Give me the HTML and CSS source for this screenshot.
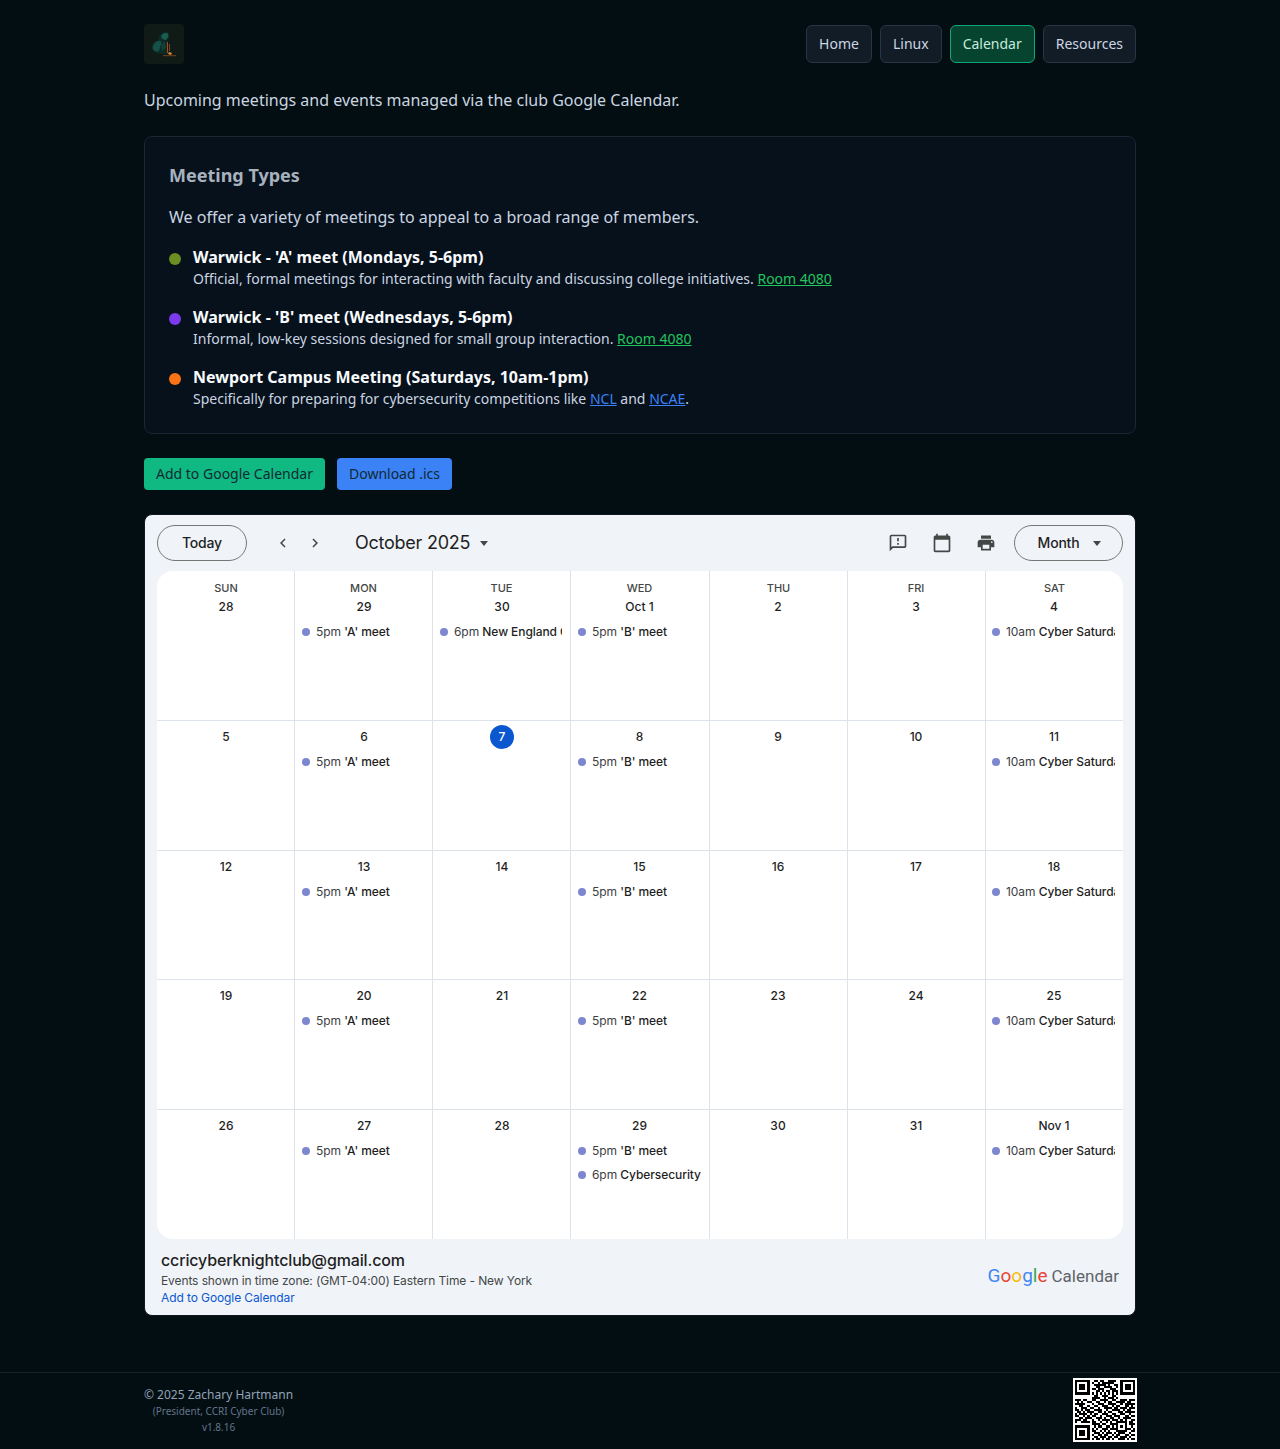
FILE: index.html
```html
<!DOCTYPE html>
<html lang="en">
<head>
<meta charset="utf-8">
<title>Calendar</title>
<link rel="stylesheet" href="styles.css">
</head>
<body>
<div class="page">
  <header class="topbar">
    <div class="logo">
      <svg viewBox="0 0 40 40" width="40" height="40" aria-hidden="true">
        <path d="M9 27c-2-4 0-9 5-11 1-4 3-7 6-8 4-1 6 2 5 6l-2 4 2 12-8 0c-3 0-6-1-8-3z" fill="#0c2b27"/>
        <path d="M9 25c-1-4 2-7 5-8 3-1 4 1 3 3l-2 7c-2 1-5 0-6-2z" fill="#175048"/>
        <path d="M17 13c0-2 2-4 5-4 2 0 3 2 2 4l-2 3c-2 0-4-1-5-3z" fill="#1b5c50"/>
        <path d="M17 20l4-2 1 6-4 3z" fill="#123f38"/>
        <path d="M23 18h1v11h-1zM25 20h.8v7H25z" fill="#a84c1d"/>
        <path d="M25 28l3 1-1 2-3-1z" fill="#e08a2a"/>
        <path d="M19 31h13v1.200H19z" fill="#5f3d1c"/>
      </svg>
    </div>
    <nav class="nav">
      <a class="nav-item" href="#">Home</a>
      <a class="nav-item" href="#">Linux</a>
      <a class="nav-item active" href="#">Calendar</a>
      <a class="nav-item" href="#">Resources</a>
    </nav>
  </header>

  <p class="intro">Upcoming meetings and events managed via the club Google Calendar.</p>

  <section class="types">
    <h2>Meeting Types</h2>
    <p class="types-lead">We offer a variety of meetings to appeal to a broad range of members.</p>
    <ul class="type-list">
      <li class="type">
        <span class="bullet olive"></span>
        <div>
          <div class="type-name">Warwick - 'A' meet (Mondays, 5-6pm)</div>
          <div class="type-desc">Official, formal meetings for interacting with faculty and discussing college initiatives. <a class="green" href="#">Room 4080</a></div>
        </div>
      </li>
      <li class="type">
        <span class="bullet purple"></span>
        <div>
          <div class="type-name">Warwick - 'B' meet (Wednesdays, 5-6pm)</div>
          <div class="type-desc">Informal, low-key sessions designed for small group interaction. <a class="green" href="#">Room 4080</a></div>
        </div>
      </li>
      <li class="type">
        <span class="bullet orange"></span>
        <div>
          <div class="type-name">Newport Campus Meeting (Saturdays, 10am-1pm)</div>
          <div class="type-desc">Specifically for preparing for cybersecurity competitions like <a class="blue" href="#">NCL</a> and <a class="blue" href="#">NCAE</a>.</div>
        </div>
      </li>
    </ul>
  </section>

  <div class="actions">
    <a class="btn btn-green" href="#">Add to Google Calendar</a>
    <a class="btn btn-blue" href="#">Download .ics</a>
  </div>

  <section class="cal">
    <div class="cal-toolbar">
      <div class="pill today">Today</div>
      <div class="arrows">
        <svg class="icon18" viewBox="0 0 24 24"><path d="M15.400 7.400 14 6l-6 6 6 6 1.400-1.400L10.800 12z"/></svg>
        <svg class="icon18" viewBox="0 0 24 24"><path d="M8.600 16.600 10 18l6-6-6-6-1.400 1.400L13.200 12z"/></svg>
      </div>
      <div class="cal-month">October 2025<span class="caret"></span></div>
      <div class="cal-tools">
        <svg class="icon20" viewBox="0 0 24 24"><path d="M20 2H4c-1.100 0-1.990.9-1.990 2L2 22l4-4h14c1.100 0 2-.9 2-2V4c0-1.100-.9-2-2-2zm0 14H5.170L4 17.170V4h16v12zM11 12h2v2h-2zm0-6h2v4h-2z"/></svg>
        <svg class="icon20" viewBox="0 0 24 24"><path d="M20 3h-1V1h-2v2H7V1H5v2H4c-1.100 0-2 .9-2 2v16c0 1.100.9 2 2 2h16c1.100 0 2-.9 2-2V5c0-1.100-.9-2-2-2zm0 18H4V8h16v13z"/></svg>
        <svg class="icon20" viewBox="0 0 24 24"><path d="M19 8H5c-1.660 0-3 1.340-3 3v6h4v4h12v-4h4v-6c0-1.660-1.340-3-3-3zm-3 11H8v-5h8v5zm3-7c-.55 0-1-.45-1-1s.45-1 1-1 1 .45 1 1-.45 1-1 1zm-1-9H6v4h12V3z"/></svg>
        <div class="pill month">Month<span class="caret small"></span></div>
      </div>
    </div>

    <div class="grid">
      <div class="cell first"><div class="dow">SUN</div><div class="date">28</div></div>
      <div class="cell first"><div class="dow">MON</div><div class="date">29</div><div class="ev"><i></i><span>5pm</span> <b>'A' meet</b></div></div>
      <div class="cell first"><div class="dow">TUE</div><div class="date">30</div><div class="ev"><i></i><span>6pm</span> <b>New England Cyber</b></div></div>
      <div class="cell first"><div class="dow">WED</div><div class="date">Oct 1</div><div class="ev"><i></i><span>5pm</span> <b>'B' meet</b></div></div>
      <div class="cell first"><div class="dow">THU</div><div class="date">2</div></div>
      <div class="cell first"><div class="dow">FRI</div><div class="date">3</div></div>
      <div class="cell first"><div class="dow">SAT</div><div class="date">4</div><div class="ev"><i></i><span>10am</span> <b>Cyber Saturday Practice</b></div></div>

      <div class="cell"><div class="date">5</div></div>
      <div class="cell"><div class="date">6</div><div class="ev"><i></i><span>5pm</span> <b>'A' meet</b></div></div>
      <div class="cell"><div class="date now"><span>7</span></div></div>
      <div class="cell"><div class="date">8</div><div class="ev"><i></i><span>5pm</span> <b>'B' meet</b></div></div>
      <div class="cell"><div class="date">9</div></div>
      <div class="cell"><div class="date">10</div></div>
      <div class="cell"><div class="date">11</div><div class="ev"><i></i><span>10am</span> <b>Cyber Saturday Practice</b></div></div>

      <div class="cell"><div class="date">12</div></div>
      <div class="cell"><div class="date">13</div><div class="ev"><i></i><span>5pm</span> <b>'A' meet</b></div></div>
      <div class="cell"><div class="date">14</div></div>
      <div class="cell"><div class="date">15</div><div class="ev"><i></i><span>5pm</span> <b>'B' meet</b></div></div>
      <div class="cell"><div class="date">16</div></div>
      <div class="cell"><div class="date">17</div></div>
      <div class="cell"><div class="date">18</div><div class="ev"><i></i><span>10am</span> <b>Cyber Saturday Practice</b></div></div>

      <div class="cell"><div class="date">19</div></div>
      <div class="cell"><div class="date">20</div><div class="ev"><i></i><span>5pm</span> <b>'A' meet</b></div></div>
      <div class="cell"><div class="date">21</div></div>
      <div class="cell"><div class="date">22</div><div class="ev"><i></i><span>5pm</span> <b>'B' meet</b></div></div>
      <div class="cell"><div class="date">23</div></div>
      <div class="cell"><div class="date">24</div></div>
      <div class="cell"><div class="date">25</div><div class="ev"><i></i><span>10am</span> <b>Cyber Saturday Practice</b></div></div>

      <div class="cell"><div class="date">26</div></div>
      <div class="cell"><div class="date">27</div><div class="ev"><i></i><span>5pm</span> <b>'A' meet</b></div></div>
      <div class="cell"><div class="date">28</div></div>
      <div class="cell"><div class="date">29</div><div class="ev"><i></i><span>5pm</span> <b>'B' meet</b></div><div class="ev"><i></i><span>6pm</span> <b>Cybersecurity Meeting</b></div></div>
      <div class="cell"><div class="date">30</div></div>
      <div class="cell"><div class="date">31</div></div>
      <div class="cell"><div class="date">Nov 1</div><div class="ev"><i></i><span>10am</span> <b>Cyber Saturday Practice</b></div></div>
    </div>

    <div class="cal-foot">
      <div class="cal-foot-info">
        <div class="cal-owner">ccricyberknightclub@gmail.com</div>
        <div class="cal-tz">Events shown in time zone: (GMT-04:00) Eastern Time - New York</div>
        <a class="cal-add" href="#">Add to Google Calendar</a>
      </div>
      <div class="gcal"><span class="gword"><span class="g-b">G</span><span class="g-r">o</span><span class="g-y">o</span><span class="g-b">g</span><span class="g-g">l</span><span class="g-r">e</span></span> <span class="gcal-name">Calendar</span></div>
    </div>
  </section>
</div>

<footer class="site-foot">
  <div class="site-foot-in">
    <div class="credit">
      <div class="credit-name">© 2025 Zachary Hartmann</div>
      <div class="credit-role">(President, CCRI Cyber Club)</div>
      <div class="credit-ver">v1.8.16</div>
    </div>
    <svg class="qr" viewBox="0 0 31 31" width="64" height="64" shape-rendering="crispEdges" aria-label="QR code">
      <rect width="31" height="31" fill="#fff"/>
      <g transform="translate(1 1)" fill="none" stroke="#000">
        <path d="M.5.500h6v6h-6zM22.500.500h6v6h-6zM.5 22.500h6v6h-6z"/>
        <path stroke-width="3" d="M2 3.500h3M24 3.500h3M2 25.500h3"/>
        <path d="M9 .5h2M12 .5h2M16 .5h4
          M8 1.500h1M11 1.500h1M13 1.500h6
          M9 2.500h6M16 2.500h1M19 2.500h2
          M10 3.500h2M14 3.500h4M20 3.500h1
          M8 4.500h2M11 4.500h3M17 4.500h3
          M10 5.500h2M13 5.500h1M15 5.500h2M18 5.500h3
          M8 6.500h1M10 6.500h1M12 6.500h1M14 6.500h1M16 6.500h1M18 6.500h1M20 6.500h1
          M9 7.500h2M13 7.500h3M18 7.500h2
          M8 8.500h4M14 8.500h1M16 8.500h3M20 8.500h1
          M0 9.500h3M4 9.500h2M8 9.500h2M12 9.500h4M18 9.500h2M22 9.500h3M26 9.500h3
          M1 10.500h1M3 10.500h1M6 10.500h2M10 10.500h2M14 10.500h1M16 10.500h2M20 10.500h4M25 10.500h2
          M0 11.500h5M8 11.500h1M11 11.500h3M16 11.500h4M22 11.500h1M24 11.500h5
          M2 12.500h2M6 12.500h1M9 12.500h2M13 12.500h3M18 12.500h1M20 12.500h2M24 12.500h2M27 12.500h1
          M0 13.500h1M3 13.500h3M7 13.500h2M11 13.500h1M14 13.500h4M19 13.500h2M22 13.500h3M26 13.500h3
          M0 14.500h2M3 14.500h1M5 14.500h2M9 14.500h4M15 14.500h1M18 14.500h4M23 14.500h1M25 14.500h2
          M1 15.500h2M4 15.500h1M6 15.500h3M11 15.500h2M14 15.500h1M16 15.500h2M21 15.500h2M24 15.500h5
          M0 16.500h1M2 16.500h4M7 16.500h1M9 16.500h2M13 16.500h3M18 16.500h2M22 16.500h2M26 16.500h1
          M0 17.500h2M4 17.500h1M6 17.500h1M8 17.500h2M12 17.500h1M15 17.500h3M19 17.500h3M24 17.500h2M27 17.500h2
          M2 18.500h2M5 18.500h3M10 18.500h3M14 18.500h1M17 18.500h2M21 18.500h1M23 18.500h4
          M0 19.500h3M4 19.500h2M8 19.500h1M11 19.500h1M13 19.500h4M18 19.500h3M22 19.500h1M24 19.500h1M27 19.500h2
          M0 20.500h1M3 20.500h4M8 20.500h2M12 20.500h1M15 20.500h1M17 20.500h1M20 20.500h5M26 20.500h2
          M8 21.500h4M13 21.500h2M17 21.500h4M24 21.500h1M26 21.500h3
          M9 22.500h1M11 22.500h2M15 22.500h2M18 22.500h1M20 22.500h1M22 22.500h1M24 22.500h1M27 22.500h1
          M8 23.500h1M10 23.500h1M13 23.500h3M17 23.500h4M24 23.500h3M28 23.500h1
          M8 24.500h2M12 24.500h1M14 24.500h1M16 24.500h1M20 24.500h5M27 24.500h2
          M9 25.500h3M13 25.500h1M15 25.500h3M19 25.500h1M21 25.500h3M26 25.500h1
          M8 26.500h1M11 26.500h2M14 26.500h2M18 26.500h1M20 26.500h2M24 26.500h2M27 26.500h2
          M9 27.500h2M12 27.500h3M16 27.500h2M19 27.500h2M22 27.500h3M26 27.500h1
          M8 28.500h1M10 28.500h2M13 28.500h1M15 28.500h2M18 28.500h1M21 28.500h3M25 28.500h1M27 28.500h2"/>
      </g>
    </svg>
  </div>
</footer>
</body>
</html>
```
FILE: styles.css
```css
* { box-sizing: border-box; }
html, body { margin: 0; padding: 0; }
body {
  background: #020e11;
  color: #cbd5e1;
  font-family: "Noto Sans", sans-serif;
  font-size: 16px;
  min-height: 1449px;
}
a { color: inherit; }
.page { width: 992px; margin: 0 auto; padding-top: 24px; }

.topbar { display: flex; justify-content: space-between; align-items: center; height: 40px; }
.logo { width: 40px; height: 40px; border-radius: 4px; background: #101a17; overflow: hidden; }
.logo svg { display: block; }
.nav { display: flex; gap: 8px; }
.nav-item {
  display: block;
  padding: 8px 12px;
  font-size: 14px;
  line-height: 20px;
  text-decoration: none;
  color: #cbd5e1;
  background: #111c27;
  border: 1px solid #293546;
  border-radius: 6px;
}
.nav-item.active { background: #064430; border-color: #10a877; color: #c6eadb; }

.intro { margin: 0; padding-top: 25px; height: 72px; line-height: 22px; color: #cbd5e1; }

.types {
  height: 298px;
  padding: 24px 24px 0;
  background: #06111c;
  border: 1px solid #1b2634;
  border-radius: 8px;
}
.types h2 { margin: 0; font-size: 18px; line-height: 28px; font-weight: 700; color: #a8b2bd; }
.types-lead { margin: 16px 0 0; font-size: 16px; line-height: 24px; color: #cbd5e1; }
.type-list { list-style: none; margin: 16px 0 0; padding: 0; display: flex; flex-direction: column; gap: 16px; }
.type { display: flex; gap: 12px; align-items: flex-start; height: 44px; }
.bullet { flex: none; width: 12px; height: 12px; border-radius: 50%; margin-top: 8px; }
.olive { background: #6b8e23; }
.purple { background: #7c3aed; }
.orange { background: #f97316; }
.type-name { font-size: 16px; line-height: 24px; font-weight: 700; color: #f8fafc; }
.type-desc { font-size: 14px; line-height: 20px; color: #cbd5e1; }
.green { color: #22c55e; }
.blue { color: #3b82f6; }

.actions { display: flex; gap: 12px; margin-top: 24px; }
.btn {
  display: block;
  height: 32px;
  padding: 0 12px;
  font-size: 14px;
  line-height: 32px;
  border-radius: 4px;
  text-decoration: none;
  color: #0f2a33;
}
.btn-green { background: #10b981; }
.btn-blue { background: #3b82f6; }

.cal {
  width: 992px;
  height: 802px;
  margin-top: 24px;
  background: #f0f4f9;
  border: 1px solid #0f1722;
  border-radius: 8px;
  font-family: Inter, Roboto, "Liberation Sans", sans-serif;
  color: #1f1f1f;
  overflow: hidden;
  display: flex;
  flex-direction: column;
  padding: 0 12px;
}
.cal-toolbar { height: 56px; flex: none; display: flex; align-items: center; }
.pill {
  height: 36px;
  border: 1px solid #747775;
  border-radius: 18px;
  display: flex;
  align-items: center;
  justify-content: center;
  font-size: 14px;
  font-weight: 500;
  letter-spacing: -0.2px;
  padding-bottom: 2px;
}
.today { width: 90px; }
.arrows { display: flex; gap: 14px; margin-left: 27px; }
.icon18 { width: 18px; height: 18px; fill: #444746; display: block; }
.cal-month { margin-left: 31px; font-size: 18px; line-height: 24px; letter-spacing: -0.25px; display: flex; align-items: center; }
.caret { width: 0; height: 0; border: 4.500px solid transparent; border-top: 5px solid #444746; border-bottom: 0; margin-left: 10px; }
.caret.small { margin: 2px 0 0 14px; }
.cal-tools { margin-left: auto; display: flex; align-items: center; gap: 24px; }
.icon20 { width: 20px; height: 20px; fill: #444746; display: block; }
.month { width: 109px; margin-left: -6px; padding-left: 2px; }

.grid {
  height: 668px;
  flex: none;
  display: grid;
  grid-template-columns: 137px 138px 138px 139px 138px 138px 138px;
  grid-template-rows: 149px 130px 129px 130px 130px;
  background: #fff;
  border-radius: 16px;
  overflow: hidden;
}
.cell {
  border-left: 1px solid #dde3ea;
  border-top: 1px solid #dde3ea;
  padding: 4px 7px 0;
  text-align: center;
  min-width: 0;
  overflow: hidden;
}
.cell:nth-child(7n+1) { border-left: 0; }
.cell:nth-child(7n+1) .date, .cell:nth-child(7n+1) .dow,
.cell:nth-child(7n+2) .date, .cell:nth-child(7n+3) .date { padding-left: 1px; }
.cell:nth-child(7n+4) .date, .cell:nth-child(7n+5) .date,
.cell:nth-child(7n+6) .date, .cell:nth-child(7n) .date,
.cell:nth-child(7n+4) .dow, .cell:nth-child(7n+6) .dow { padding-right: 1px; }
.cell:nth-child(7n) .ev { margin-left: -1px; }
.cell.first { border-top: 0; padding-top: 11px; }
.dow { font-size: 11px; line-height: 12px; font-weight: 500; color: #444746; margin-bottom: 1px; }
.date { font-size: 12px; line-height: 24px; font-weight: 500; color: #1f1f1f; height: 24px; margin-bottom: 1px; }
.now span { display: inline-block; width: 24px; height: 24px; border-radius: 50%; background: #0b57d0; color: #fff; }
.ev {
  height: 24px;
  line-height: 24px;
  font-size: 12px;
  letter-spacing: -0.08px;
  white-space: nowrap;
  overflow: hidden;
  text-align: left;
  color: #3c4043;
  margin-right: 1px;
}
.ev i { display: inline-block; width: 8px; height: 8px; border-radius: 50%; background: #7d87cf; margin-right: 6px; }
.ev b { font-weight: 500; color: #1f1f1f; }

.cal-foot { flex: 1; display: flex; justify-content: space-between; align-items: flex-start; padding: 11px 4px 0; }
.cal-owner { font-size: 16px; line-height: 20px; font-weight: 500; letter-spacing: -0.14px; }
.cal-tz { font-size: 12px; line-height: 16px; color: #444746; margin-top: 3px; letter-spacing: -0.1px; }
.cal-add { display: block; font-size: 12px; line-height: 18px; color: #0b57d0; text-decoration: none; letter-spacing: -0.1px; }
.gcal { font-family: Roboto, sans-serif; font-size: 17px; color: #5f6368; display: flex; align-items: baseline; gap: 4px; padding-top: 14px; }
.gword { font-size: 19px; }
.g-b { color: #4285f4; }
.g-r { color: #ea4335; }
.g-y { color: #fbbc05; }
.g-g { color: #34a853; }

.site-foot { margin-top: 56px; border-top: 1px solid #16212c; height: 77px; }
.site-foot-in { width: 992px; margin: 0 auto; display: flex; justify-content: space-between; }
.credit { text-align: center; padding-top: 13px; }
.credit-name { font-size: 12px; line-height: 17px; color: #94a3b8; }
.credit-role { font-size: 10px; line-height: 16px; color: #64748b; }
.credit-ver { font-size: 10px; line-height: 16px; color: #64748b; }
.qr { display: block; margin: 5px -1px 0 0; }
```
